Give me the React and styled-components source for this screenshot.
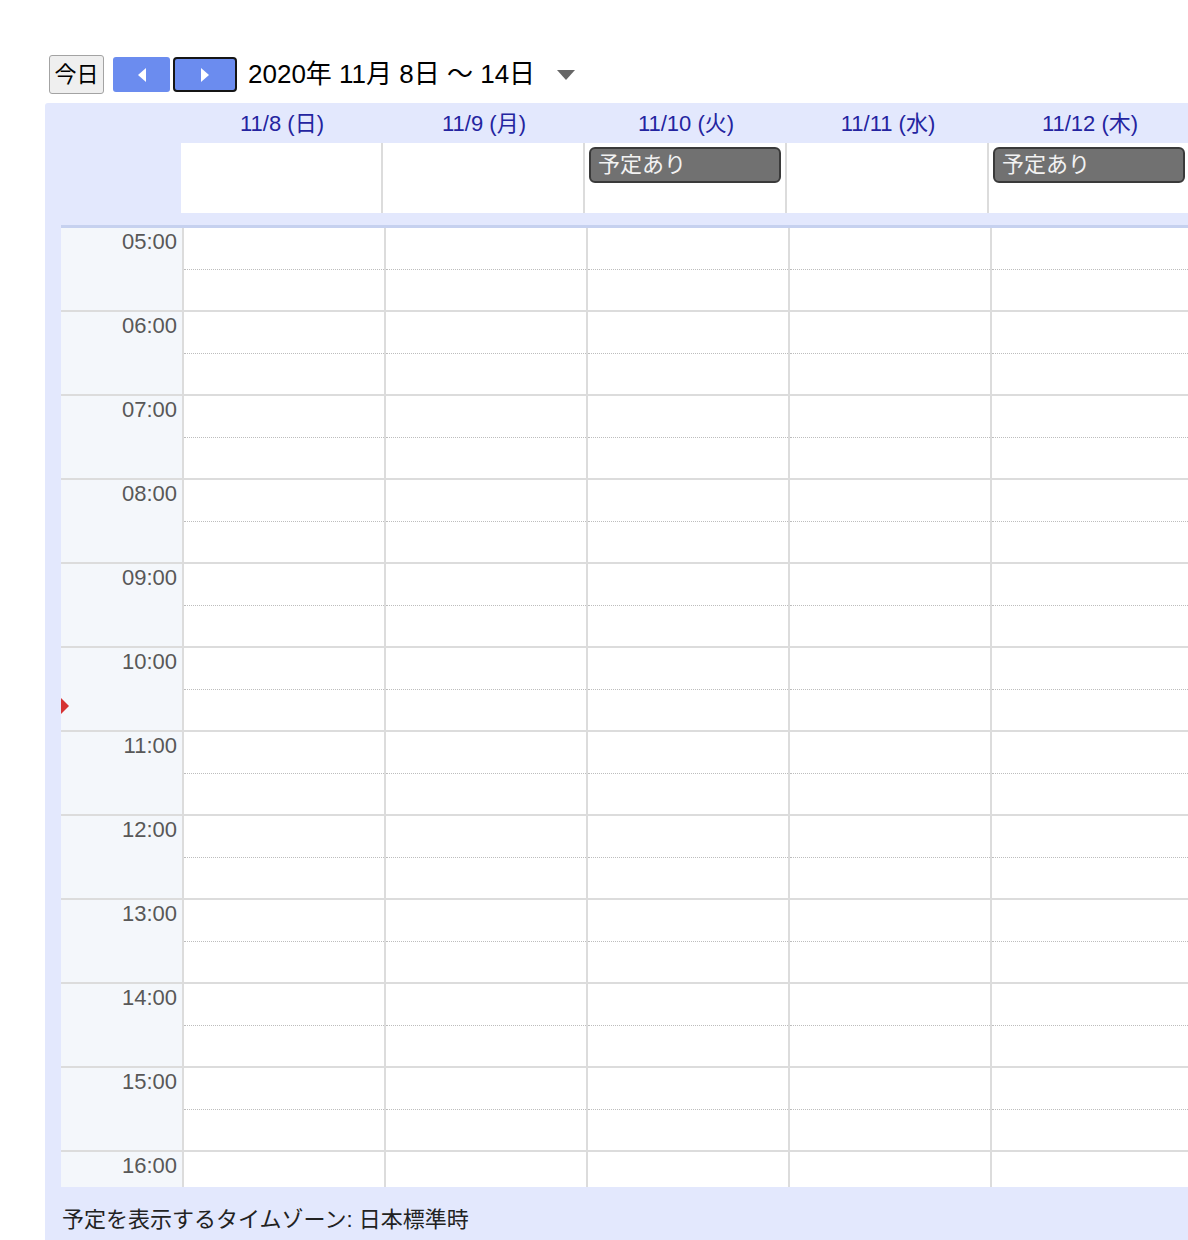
import React from "react";
import styled, { createGlobalStyle } from "styled-components";

const Global = createGlobalStyle`
  html, body { margin: 0; padding: 0; background: #fff; overflow: hidden; }
  body { font-family: "Liberation Sans", "Noto Sans CJK JP", Arial, sans-serif; }
  * { box-sizing: border-box; }
`;

const COL = 202;
const DAYS = [
  { label: "11/8 (日)" },
  { label: "11/9 (月)" },
  { label: "11/10 (火)", event: "予定あり" },
  { label: "11/11 (水)" },
  { label: "11/12 (木)", event: "予定あり" },
];
const HOURS = ["05:00","06:00","07:00","08:00","09:00","10:00","11:00","12:00","13:00","14:00","15:00","16:00"];

const Page = styled.div`
  padding: 55px 0 0 45px;
  width: 1300px;
`;

const Toolbar = styled.div`
  display: flex;
  align-items: center;
  height: 39px;
  margin-left: 4px;
  margin-bottom: 9px;
`;

const TodayButton = styled.button`
  width: 55px;
  height: 39px;
  padding: 0 0 6px;
  border: 1px solid #a3a3a3;
  border-radius: 3px;
  background: #efefef;
  color: #000;
  font: 22px "Liberation Sans", "Noto Sans CJK JP", sans-serif;
  margin-right: 9px;
`;

const NavButton = styled.button`
  display: flex;
  align-items: center;
  justify-content: center;
  height: 35px;
  width: ${p => (p.$focused ? 64 : 57)}px;
  padding: 0;
  background: #6b8cef;
  border: ${p => (p.$focused ? "2px solid #151515" : "none")};
  border-radius: ${p => (p.$focused ? 4 : 3)}px;
  margin-right: ${p => p.$mr || 0}px;
`;

const Title = styled.div`
  font-size: 26px;
  line-height: 30px;
  padding-bottom: 2px;
  color: #000;
  white-space: nowrap;
  margin-right: 22px;
`;

const Panel = styled.div`
  background: #e3e8fd;
  border-top-left-radius: 3px;
`;

const HeaderRow = styled.div`
  display: flex;
  height: 40px;
`;

const HeaderGutter = styled.div`
  flex: 0 0 136px;
`;

const DayLabel = styled.div`
  flex: 0 0 ${COL}px;
  text-align: center;
  line-height: 42px;
  font-size: 22px;
  color: #2424a0;
`;

const AllDayRow = styled.div`
  display: flex;
  height: 70px;
`;

const AllDayCell = styled.div`
  flex: 0 0 ${COL}px;
  background: #fff;
  border-right: 2px solid #dcdcdc;
  padding: 4px 4px 0 4px;
`;

const EventChip = styled.div`
  height: 36px;
  background: #717171;
  border: 2px solid #3a3a3a;
  border-radius: 6px;
  color: #f2f2f2;
  font-size: 22px;
  line-height: 31px;
  padding-left: 7px;
`;

const Body = styled.div`
  margin-top: 12px;
  margin-left: 16px;
  border-top: 3px solid #c6d1ef;
  height: 962px;
  overflow: hidden;
  position: relative;
  background: #fff;
`;

const HourRow = styled.div`
  display: flex;
  height: 84px;
  border-bottom: 2px solid #dcdcdc;
`;

const TimeCell = styled.div`
  flex: 0 0 121px;
  background: #f4f7fb;
  text-align: right;
  padding: 3px 5px 0 0;
  font-size: 22px;
  line-height: 22px;
  color: #585858;
`;

const SlotCell = styled.div`
  flex: 0 0 ${COL}px;
  border-left: 2px solid #dcdcdc;
  display: flex;
  flex-direction: column;
`;

const HalfSlot = styled.div`
  height: 42px;
  border-bottom: 1px dotted #bdbdbd;
`;

const NowMarker = styled.div`
  position: absolute;
  left: 0;
  top: 470px;
  width: 0;
  height: 0;
  border-left: 8px solid #d63333;
  border-top: 8px solid transparent;
  border-bottom: 8px solid transparent;
`;

const Footer = styled.div`
  height: 60px;
  padding: 14px 0 0 17px;
  font-size: 22px;
  color: #222;
`;

const Tri = ({ dir }) => (
  <svg width="10" height="16" viewBox="0 0 10 16">
    {dir === "left" ? (
      <polygon points="9,1 1,8 9,15" fill="#fff" />
    ) : (
      <polygon points="1,1 9,8 1,15" fill="#fff" />
    )}
  </svg>
);

export default function App() {
  return (
    <Page>
      <Global />
      <Toolbar>
        <TodayButton>今日</TodayButton>
        <NavButton $mr={3}><Tri dir="left" /></NavButton>
        <NavButton $focused $mr={11}><Tri dir="right" /></NavButton>
        <Title>2020年 11月 8日 〜 14日</Title>
        <svg width="18" height="10" viewBox="0 0 18 10">
          <polygon points="0,0 18,0 9,10" fill="#666" />
        </svg>
      </Toolbar>
      <Panel>
        <HeaderRow>
          <HeaderGutter />
          {DAYS.map(d => <DayLabel key={d.label}>{d.label}</DayLabel>)}
        </HeaderRow>
        <AllDayRow>
          <HeaderGutter />
          {DAYS.map(d => (
            <AllDayCell key={d.label}>
              {d.event && <EventChip>{d.event}</EventChip>}
            </AllDayCell>
          ))}
        </AllDayRow>
        <Body>
          {HOURS.map(h => (
            <HourRow key={h}>
              <TimeCell>{h}</TimeCell>
              {DAYS.map(d => (
                <SlotCell key={d.label}>
                  <HalfSlot />
                </SlotCell>
              ))}
            </HourRow>
          ))}
          <NowMarker />
        </Body>
        <Footer>予定を表示するタイムゾーン: 日本標準時</Footer>
      </Panel>
    </Page>
  );
}
